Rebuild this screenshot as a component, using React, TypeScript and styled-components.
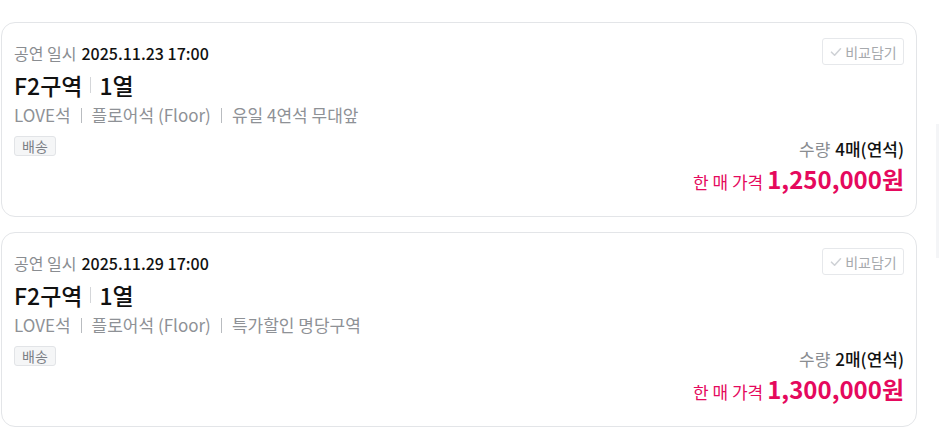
import React from "react";
import styled, { createGlobalStyle } from "styled-components";

const Global = createGlobalStyle`
  html, body { margin: 0; padding: 0; background: #ffffff; }
  body { font-family: "Noto Sans CJK KR", "Noto Sans", sans-serif; -webkit-font-smoothing: antialiased; }
`;

const Page = styled.div`
  width: 939px;
  height: 444px;
  box-sizing: border-box;
  padding: 22px 22px 0 1px;
  display: flex;
  flex-direction: column;
  gap: 15px;
  overflow: hidden;
  position: relative;
`;

const Card = styled.div`
  box-sizing: border-box;
  height: 195px;
  border: 1px solid #e3e5e8;
  border-radius: 14px;
  padding: 19px 12px 20px 12px;
  display: flex;
  justify-content: space-between;
  background: #fff;
`;

const Info = styled.div`
  display: flex;
  flex-direction: column;
  align-items: flex-start;
`;

const DateLine = styled.div`
  font-size: 16px;
  line-height: 22px;
  color: #8a8d91;
  display: flex;
  gap: 5px;
`;

const DateValue = styled.span`
  color: #111;
  font-weight: 500;
`;

const Title = styled.div`
  margin-top: 6px;
  font-size: 23px;
  line-height: 30px;
  font-weight: 500;
  color: #111;
  display: flex;
  align-items: center;
`;

const TitleDivider = styled.span`
  display: inline-block;
  width: 1px;
  height: 16px;
  background: #d4d6d9;
  margin: 0 8px 0 8px;
`;

const Detail = styled.div`
  margin-top: 1px;
  font-size: 17px;
  line-height: 28px;
  color: #8e9196;
  display: flex;
  align-items: center;
`;

const DetailDivider = styled.span`
  display: inline-block;
  width: 1px;
  height: 15px;
  background: #b9bcc0;
  margin: 0 10px;
`;

const Tag = styled.span`
  margin-top: 7px;
  box-sizing: border-box;
  height: 20px;
  padding: 0 7px;
  border: 1px solid #e2e4e7;
  border-radius: 3px;
  background: #f5f6f7;
  font-size: 14px;
  line-height: 18px;
  color: #7c8086;
`;

const Side = styled.div`
  display: flex;
  flex-direction: column;
  align-items: flex-end;
  justify-content: space-between;
  margin-top: -4px;
`;

const CompareButton = styled.button`
  box-sizing: border-box;
  height: 27px;
  width: 82px;
  border: 1px solid #e6e8eb;
  border-radius: 3px;
  background: #fff;
  display: flex;
  align-items: center;
  justify-content: center;
  gap: 2px;
  padding: 0;
  font-family: inherit;
  font-size: 14px;
  color: #a6a9ad;
  cursor: pointer;
`;

const Bottom = styled.div`
  display: flex;
  flex-direction: column;
  align-items: flex-end;
  margin-bottom: 2px;
`;

const Qty = styled.div`
  font-size: 17px;
  line-height: 26px;
  color: #8a8d91;
`;

const QtyValue = styled.span`
  color: #111;
  font-weight: 500;
  margin-left: 5px;
`;

const PriceLine = styled.div`
  margin-top: 1px;
  display: flex;
  align-items: baseline;
  color: #e5095d;
`;

const PriceLabel = styled.span`
  font-size: 17px;
  margin-right: 4px;
`;

const PriceValue = styled.span`
  font-size: 24px;
  line-height: 31px;
  font-weight: 700;
`;

const ScrollHint = styled.div`
  position: absolute;
  right: 0;
  top: 124px;
  width: 3px;
  height: 134px;
  background: #f4f5f7;
`;

const Check = () => (
  <svg width="14" height="14" viewBox="0 0 14 14" fill="none">
    <path d="M2.5 7.2 L5.6 10.2 L11.5 3.8" stroke="#cfd2d6" strokeWidth="1.6" strokeLinecap="round" strokeLinejoin="round" />
  </svg>
);

type Item = {
  date: string;
  zone: string;
  row: string;
  details: string[];
  qty: string;
  price: string;
};

const items: Item[] = [
  {
    date: "2025.11.23 17:00",
    zone: "F2구역",
    row: "1열",
    details: ["LOVE석", "플로어석 (Floor)", "유일 4연석 무대앞"],
    qty: "4매(연석)",
    price: "1,250,000원",
  },
  {
    date: "2025.11.29 17:00",
    zone: "F2구역",
    row: "1열",
    details: ["LOVE석", "플로어석 (Floor)", "특가할인 명당구역"],
    qty: "2매(연석)",
    price: "1,300,000원",
  },
];

export default function App() {
  return (
    <>
      <Global />
      <Page>
        {items.map((it, i) => (
          <Card key={i}>
            <Info>
              <DateLine>
                공연 일시<DateValue>{it.date}</DateValue>
              </DateLine>
              <Title>
                {it.zone}
                <TitleDivider />
                {it.row}
              </Title>
              <Detail>
                {it.details.map((d, j) => (
                  <React.Fragment key={j}>
                    {j > 0 && <DetailDivider />}
                    {d}
                  </React.Fragment>
                ))}
              </Detail>
              <Tag>배송</Tag>
            </Info>
            <Side>
              <CompareButton>
                <Check />
                비교담기
              </CompareButton>
              <Bottom>
                <Qty>
                  수량<QtyValue>{it.qty}</QtyValue>
                </Qty>
                <PriceLine>
                  <PriceLabel>한 매 가격</PriceLabel>
                  <PriceValue>{it.price}</PriceValue>
                </PriceLine>
              </Bottom>
            </Side>
          </Card>
        ))}
        <ScrollHint />
      </Page>
    </>
  );
}
